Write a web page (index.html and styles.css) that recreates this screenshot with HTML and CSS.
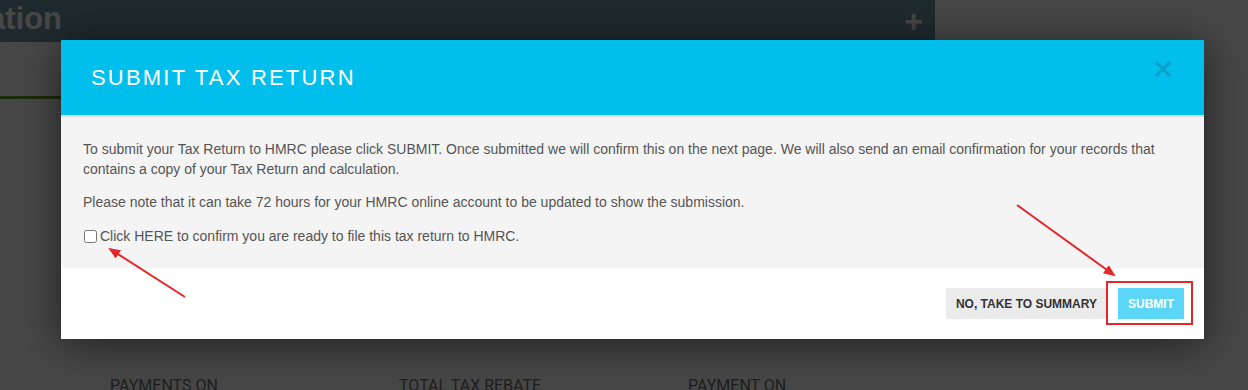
FILE: index.html
```html
<!DOCTYPE html>
<html lang="en">
<head>
    <meta charset="UTF-8">
    <title>Submit Tax Return</title>
    <link rel="stylesheet" href="styles.css">
</head>
<body>
<div class="page">
    <div class="topbar">
        <h1 class="page-title">ation</h1>
        <span class="add-btn">+</span>
    </div>
    <div class="progress"></div>
    <div class="stats">
        <div class="stat">PAYMENTS ON</div>
        <div class="stat">TOTAL TAX REBATE</div>
        <div class="stat">PAYMENT ON</div>
    </div>
</div>

<div class="backdrop"></div>

<div class="modal">
    <div class="modal-header">
        <h2 class="modal-title">SUBMIT TAX RETURN</h2>
        <button class="close-btn" aria-label="Close">
            <svg width="18" height="18" viewBox="0 0 18 18"><path d="M2 2 L16 16 M16 2 L2 16" stroke="currentColor" stroke-width="3" fill="none"/></svg>
        </button>
    </div>
    <div class="modal-body">
        <p>To submit your Tax Return to HMRC please click SUBMIT. Once submitted we will confirm this on the next page. We will also send an email confirmation for your records that contains a copy of your Tax Return and calculation.</p>
        <p>Please note that it can take 72 hours for your HMRC online account to be updated to show the submission.</p>
        <label class="confirm"><input type="checkbox"> Click HERE to confirm you are ready to file this tax return to HMRC.</label>
    </div>
    <div class="modal-footer">
        <button class="btn btn-default">NO, TAKE TO SUMMARY</button>
        <button class="btn btn-primary">SUBMIT</button>
    </div>
</div>

<!-- annotations drawn over the screenshot -->
<div class="highlight"></div>
<svg class="arrows" width="1248" height="390" viewBox="0 0 1248 390">
    <defs>
        <marker id="head" markerWidth="12" markerHeight="10" refX="10" refY="5" orient="auto" markerUnits="userSpaceOnUse">
            <path d="M0 0 L12 5 L0 10 Z" fill="#e52629"/>
        </marker>
    </defs>
    <line x1="185" y1="297" x2="110" y2="249" stroke="#e52629" stroke-width="2" marker-end="url(#head)"/>
    <line x1="1017" y1="205" x2="1114" y2="275" stroke="#e52629" stroke-width="2" marker-end="url(#head)"/>
</svg>
</body>
</html>
```

FILE: styles.css
```css
body {
    margin: 0;
    width: 1248px;
    height: 390px;
    overflow: hidden;
    position: relative;
    font-family: "Liberation Sans", Arial, sans-serif;
    background: #fff;
}
.page {
    height: 390px;
    display: flex;
    flex-direction: column;
}
.topbar {
    width: 935px;
    height: 42px;
    background: #6f98aa;
    display: flex;
    justify-content: space-between;
    align-items: center;
    box-sizing: border-box;
    padding-right: 12px;
}
.page-title {
    margin: -4px 0 0 -12px;
    font-size: 31px;
    font-weight: bold;
    color: #fff;
}
.add-btn {
    font-size: 32px;
    font-weight: bold;
    color: #fff;
    line-height: 1;
}
.progress {
    width: 61px;
    height: 3px;
    margin-top: 54px;
    background: #5c9e1c;
}
.stats {
    display: flex;
    margin-top: auto;
    padding-left: 110px;
}
.stat {
    width: 289px;
    font-family: "Liberation Sans Narrow", Roboto, sans-serif;
    font-size: 16px;
    color: #707070;
    line-height: 1;
    margin-bottom: -4px;
}
.backdrop {
    position: absolute;
    inset: 0;
    background: rgba(0, 0, 0, 0.72);
}
.modal {
    position: absolute;
    top: 40px;
    left: 61px;
    width: 1143px;
    background: #fff;
    box-shadow: 0 5px 40px rgba(0, 0, 0, 0.55);
}
.modal-header {
    height: 75px;
    background: #00bfed;
    border-bottom: 2px solid #dcdcdc;
    display: flex;
    align-items: center;
    justify-content: space-between;
    padding: 0 32px 0 30px;
}
.modal-title {
    margin: 0;
    font-size: 22px;
    font-weight: normal;
    letter-spacing: 2.2px;
    color: #fff;
    padding-top: 1px;
}
.close-btn {
    border: none;
    background: transparent;
    padding: 0;
    color: #0c9dc6;
    margin-top: -18px;
    cursor: pointer;
}
.close-btn svg {
    display: block;
}
.modal-body {
    background: #f4f4f4;
    padding: 22px 22px 21px;
    font-size: 14px;
    line-height: 20px;
    color: #555;
}
.modal-body p {
    margin: 0 0 13px;
}
.confirm {
    display: flex;
    align-items: center;
    gap: 3px;
    height: 22px;
}
.confirm input {
    margin: 0 0 0 1px;
    width: 13px;
    height: 13px;
}
.modal-footer {
    display: flex;
    justify-content: flex-end;
    gap: 11px;
    padding: 20px 20px 20px;
}
.btn {
    border: none;
    height: 31px;
    padding: 0 10px;
    font-family: "Liberation Sans", Arial, sans-serif;
    font-size: 12px;
    font-weight: bold;
    cursor: pointer;
}
.btn-default {
    background: #ebebeb;
    color: #333;
}
.btn-primary {
    background: #5bd6f6;
    color: #fff;
}
.highlight {
    position: absolute;
    left: 1106px;
    top: 281px;
    width: 83px;
    height: 40px;
    border: 2px solid #e52629;
}
.arrows {
    position: absolute;
    top: 0;
    left: 0;
}
```
